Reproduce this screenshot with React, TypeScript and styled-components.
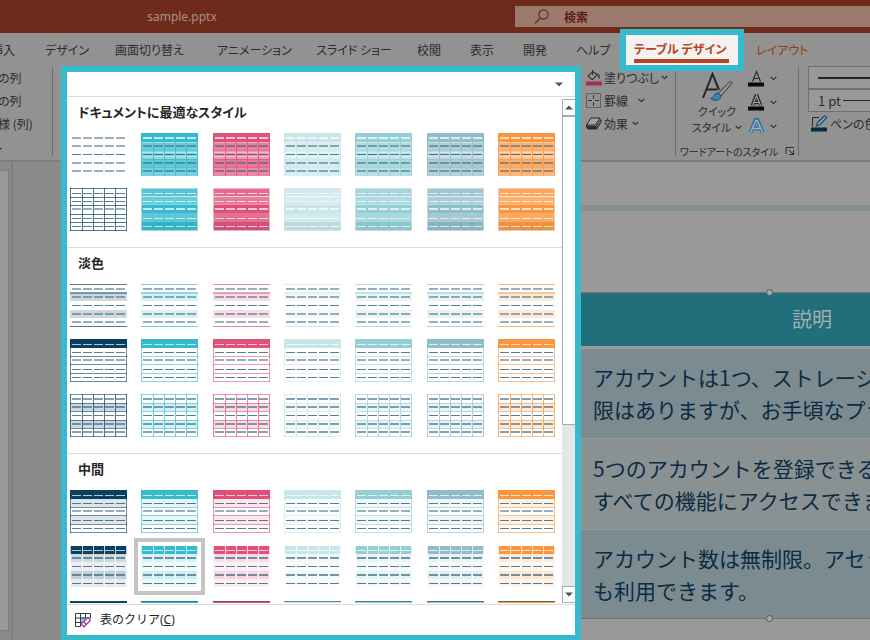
import React from 'react';
import styled, { createGlobalStyle } from 'styled-components';

const jp = '"Noto Sans CJK JP", sans-serif';
const accent = '#36bacd';

const GlobalStyle = createGlobalStyle`
  *, *::before, *::after { box-sizing: border-box; }
  body { margin: 0; background: #929292; font-family: "Noto Sans", ${jp}; }
  button, input { font: inherit; color: inherit; }
  button { border: 0; padding: 0; margin: 0; background: none; text-align: left; cursor: pointer; }
`;

const Window = styled.div`
  position: relative;
  display: flex;
  flex-direction: column;
  height: 100vh;
  overflow: hidden;
  color: #2c2c2c;
`;

/* ---------- title bar ---------- */

const TitleBar = styled.header`
  display: flex;
  align-items: center;
  flex: none;
  height: 33px;
  background: #6e2a1a;
`;

const FileName = styled.div`
  width: 364px;
  text-align: center;
  font-size: 12px;
  line-height: 20px;
  color: #ab9189;
`;

const Search = styled.label`
  display: flex;
  align-items: center;
  flex: 1;
  gap: 14px;
  height: 21px;
  margin-left: 151px;
  padding-left: 19px;
  background: #9b7a6e;
  color: #5f1f10;
`;

const SearchInput = styled.input`
  flex: 1;
  min-width: 0;
  border: 0;
  padding: 0;
  background: transparent;
  outline: 0;
  font: bold 12px/20px ${jp};
  &::placeholder { color: #5f1f10; opacity: 1; }
`;

/* ---------- tabs ---------- */

const Tabs = styled.nav`
  display: grid;
  grid-template-columns: 54px 70px 102px 99px 101px 53px 53px 53px 44px 136px 1fr;
  grid-template-rows: 33px;
  align-items: center;
  flex: none;
  height: 33px;
  margin-left: -9px;
`;

const Tab = styled.button<{ $tone?: string }>`
  font: 12px/20px ${jp};
  font-feature-settings: "palt";
  white-space: nowrap;
  color: ${p => p.$tone || '#2c2c2c'};
`;

const ActiveTab = styled(Tab)`
  position: relative;
  z-index: 3;
  width: 124px;
  height: 42px;
  margin: -4px 0 -5px;
  border: 6px solid ${accent};
  padding: 2px 9px 0 8px;
  background: #f3f2f1;
  font-weight: bold;
  color: #b7421f;
  &::after {
    content: "";
    display: block;
    height: 4px;
    background: #b7421f;
  }
`;

/* ---------- ribbon ---------- */

const Ribbon = styled.section`
  display: flex;
  flex: none;
  height: 96px;
  border-bottom: 2px solid #7c7c7c;
  font: 12px/23px ${jp};
  font-feature-settings: "palt";
  white-space: nowrap;
`;

const Group = styled.div<{ $w: number; $line?: boolean }>`
  position: relative;
  flex: none;
  width: ${p => p.$w}px;
  &::after {
    content: "";
    display: ${p => (p.$line ? 'block' : 'none')};
    position: absolute;
    top: 1px;
    bottom: 4px;
    right: 0;
    width: 1px;
    background: #6c6c6c;
  }
`;

const OptionLabels = styled(Group)`
  display: flex;
  flex-direction: column;
  align-items: flex-start;
  & > button { margin-left: -2px; }
`;

const Commands = styled(Group)`
  display: flex;
  flex-direction: column;
  align-items: flex-start;
  padding-left: 3px;
`;

const Command = styled.button<{ $gap?: number }>`
  display: flex;
  align-items: center;
  gap: 2px;
  height: 23px;
  & > svg:last-child { margin-left: ${p => p.$gap || 0}px; }
`;

const MoreOptions = styled.button`
  display: flex;
  align-items: center;
  height: 23px;
  margin-top: 4px;
  & > svg { margin-left: -3px; }
`;

const WordArt = styled(Group)`
  display: grid;
  grid-template-columns: 62px 1fr;
  grid-template-rows: 72px 1fr;
  padding-left: 4px;
`;

const QuickStyle = styled.button`
  display: flex;
  flex-direction: column;
  align-items: center;
  padding: 6px 0 0 12px;
  font-size: 11px;
  line-height: 16px;
  & > span { display: flex; align-items: center; gap: 4px; }
  & > svg { flex: none; }
`;

const LetterButtons = styled.div`
  display: flex;
  flex-direction: column;
  padding: 1px 0 0 6px;
`;

const LetterButton = styled.button`
  display: flex;
  align-items: center;
  gap: 5px;
  height: 24px;
`;

const GroupCaption = styled.div`
  grid-column: 1 / -1;
  display: flex;
  align-items: center;
  gap: 7px;
  height: 26px;
  font-size: 10px;
`;

const Pen = styled.div`
  flex: 1;
  min-width: 0;
  padding-left: 9px;
  overflow: hidden;
`;

const PenField = styled.button`
  display: flex;
  align-items: center;
  gap: 2px;
  width: 120%;
  height: 23px;
  border: 1px solid #707070;
  padding-left: 9px;
  background: #989898;
  font-size: 13px;
`;

const Stroke = styled.span<{ $h: number }>`
  flex: 1;
  height: ${p => p.$h}px;
  background: #262626;
`;

const PenColor = styled(Command)`
  padding-left: 3px;
`;

/* ---------- slide area ---------- */

const Workspace = styled.main`
  display: flex;
  flex: 1;
  min-height: 0;
  background: #8a8a8a;
`;

const Thumbnails = styled.aside`
  flex: none;
  width: 9px;
  margin: 8px 0 9px;
  border: solid #7c7c7c;
  border-width: 1px 1px 1px 0;
  background: #999999;
`;

const Splitter = styled.div`
  flex: none;
  width: 2px;
  margin: 0 48px 0 2px;
  background: #7e7e7e;
`;

const Slide = styled.section`
  flex: 1;
  min-width: 0;
  padding-top: 43px;
  background: #999999;
`;

const SlideRule = styled.div`
  height: 6px;
  margin-bottom: 81px;
  background: #849094;
`;

const TableFrame = styled.div`
  position: relative;
  width: 546px;
  margin-left: 435px;
  border: 1px solid #757575;
`;

const Plans = styled.table`
  width: 100%;
  table-layout: fixed;
  border-collapse: collapse;
  font: 21px/32px ${jp};
  color: #0a2c45;
  th, td { padding: 0 10px; text-align: left; }
  th { height: 54px; border-bottom: 3px solid #999999; background: #216f7b; font-size: 20px; font-weight: normal; text-align: center; color: #a3aeb0; }
  td { height: 91px; border-bottom: 1px solid #959b9c; background: #7b8b8f; white-space: nowrap; }
  tr:nth-child(even) td { background: #8a9192; }
  tbody tr:last-child td { height: 89px; border-bottom: 0; }
`;

const Handle = styled.span<{ $bottom?: boolean }>`
  position: absolute;
  left: 50%;
  ${p => (p.$bottom ? 'bottom' : 'top')}: -4px;
  width: 7px;
  height: 7px;
  margin-left: -3px;
  border: 1px solid #555555;
  border-radius: 50%;
  background: #aaaaaa;
`;

/* ---------- style gallery ---------- */

const Menu = styled.section`
  position: absolute;
  top: 66px;
  bottom: -1px;
  left: 61px;
  z-index: 2;
  display: flex;
  flex-direction: column;
  width: 520px;
  border: 6px solid ${accent};
  background: #ffffff;
  color: #262626;
`;

const Filter = styled.button`
  display: flex;
  align-items: center;
  justify-content: flex-end;
  flex: none;
  height: 25px;
  border-bottom: 1px solid #dcdcdc;
  padding-right: 12px;
`;

const Body = styled.div`
  display: flex;
  flex: 1;
  min-height: 0;
`;

const Sections = styled.div`
  flex: 1;
  overflow: hidden;
`;

const Section = styled.section`
  height: 206px;
  border-bottom: 1px solid #dcdcdc;
  padding: 0 7px 0 3px;
  &:first-child { height: 151px; }
  &:last-child { border: 0; }
`;

const Heading = styled.h2`
  height: 36px;
  margin: 0;
  padding: 5px 0 0 8px;
  font: bold 13px/20px ${jp};
  font-feature-settings: "palt";
`;

const Swatches = styled.div`
  display: flex;
  justify-content: space-between;
  margin-bottom: 12px;
`;

const SwatchButton = styled.button<{ $on?: boolean }>`
  width: 57px;
  height: 43px;
  outline: ${p => (p.$on ? '4px solid #c4c4c4' : '0')};
  outline-offset: 3px;
  & > svg { display: block; }
`;

const Scrollbar = styled.div`
  display: flex;
  flex-direction: column;
  flex: none;
  width: 13px;
  margin: 2px 0 1px;
  background: #e6e6e6;
`;

const ScrollArrow = styled.button`
  display: flex;
  align-items: center;
  justify-content: center;
  flex: none;
  height: 17px;
  border: 1px solid #ababab;
  border-right: 0;
  background: #ffffff;
`;

const Thumb = styled.div`
  height: 309px;
  margin-bottom: auto;
  border: 1px solid #ababab;
  border-right: 0;
  background: #ffffff;
`;

const Clear = styled.button`
  display: flex;
  align-items: center;
  flex: none;
  gap: 9px;
  height: 31px;
  border-top: 1px solid #dcdcdc;
  padding-left: 8px;
  font: 12px/20px "Noto Sans", ${jp};
`;

/* ---------- icons ---------- */

const Chevron = () => (
  <svg width="7" height="5" viewBox="0 0 7 5" fill="none" stroke="#2c2c2c" strokeWidth="1.1">
    <path d="M.7 1l2.8 2.6L6.300 1" />
  </svg>
);

const Triangle = ({ up = false, size = 8 }: { up?: boolean; size?: number }) => (
  <svg width={size} height="5" viewBox="0 0 8 5">
    <path d={up ? 'M0 4.500L4 .5l4 4z' : 'M0 .5h8l-4 4z'} fill="#555555" />
  </svg>
);

const SearchIcon = () => (
  <svg width="16" height="16" viewBox="0 0 16 16" fill="none" stroke="#6b2616" strokeWidth="1.2">
    <circle cx="9.500" cy="5.500" r="4.600" />
    <path d="M6.200 8.900L1 14.500" />
  </svg>
);

const FillIcon = () => (
  <svg width="17" height="17" viewBox="0 0 17 17" fill="none">
    <path d="M7.500 2.500L3.200 7.200l4 3.600 5-5.300zM7.500 1v5" stroke="#2c2c2c" strokeWidth="1.1" />
    <path d="M11.500 5c2.400.1 2.900 1.700 2.400 4.500" stroke="#154f74" strokeWidth="1.700" />
    <path d="M1 12.500h16v4H1z" fill="#a03257" />
  </svg>
);

const BordersIcon = () => (
  <svg width="17" height="17" viewBox="0 0 17 17" fill="none" stroke="#333333">
    <path d="M1.500 1.500h14v14h-14z" strokeDasharray="1 1" />
    <path d="M8.500 3v11M3 8.500h11" strokeDasharray="4 3" />
  </svg>
);

const EffectsIcon = () => (
  <svg width="17" height="15" viewBox="0 0 17 15" strokeLinejoin="round">
    <path d="M1.500 9l4.500-7h9l-4.500 7z" fill="#a2a2a2" stroke="#262626" />
    <path d="M1.500 9v2.500l1.500 1.500h8.500l4.500-7V3.500L11 10.500H3z" fill="#333333" stroke="#262626" />
    <path d="M11.500 11l4-6" stroke="#8c8c8c" />
  </svg>
);

const QuickIcon = () => (
  <svg width="32" height="31" viewBox="0 0 32 31" fill="none">
    <path d="M2 26L11.500 2 18 18M5.500 17.500H16" stroke="#262626" strokeWidth="2" />
    <path d="M28.500 10c1.400-1 3 .3 2 1.800L20 24l-2.800-2.700z" fill="#969696" stroke="#333333" />
    <path d="M17 21c-3 0-3.500 2-4.300 3.500-.8 1.200-2 1.500-3.200 1.500 2.500 3.500 10 3.500 10.500-2.300z" fill="#3f86ad" stroke="#164e74" />
  </svg>
);

const LetterIcon = ({ kind }: { kind: 'fill' | 'outline' | 'glow' }) => (
  <svg width="17" height="17" viewBox="0 0 17 17" fill="none">
    {kind === 'glow' ? (
      <>
        <path d="M2.500 14.500L7.500 2h2l5 12.500M4.500 10.500h8" stroke="#2b75a3" strokeWidth="4" />
        <path d="M2.500 14.500L7.800 2.500h1.400l5.300 12M4.800 10.500h7.400" stroke="#a5b3bb" strokeWidth="1.400" />
      </>
    ) : (
      <>
        {kind === 'outline' && <path d="M4.300 11.500L8 2h1l3.700 9.500M5.500 8.500h6" stroke="#2c2c2c" strokeWidth="3.400" />}
        <path d="M4.500 11.500L8.500 1.500l4 10M5.500 8.500h6" stroke={kind === 'outline' ? '#a0a0a0' : '#2c2c2c'} strokeWidth="1.200" />
        <path d="M0 12.500h16v4H0z" fill="#080808" />
      </>
    )}
  </svg>
);

const LauncherIcon = () => (
  <svg width="10" height="10" viewBox="0 0 10 10" fill="none" stroke="#2c2c2c">
    <path d="M1 8V1.500h8M4 4l4 4M8.500 4v4.500H4" />
  </svg>
);

const PenIcon = () => (
  <svg width="17" height="17" viewBox="0 0 17 17" fill="none">
    <path d="M8 2.500H1.500v9" stroke="#2c2c2c" />
    <path d="M5.500 11l1-3.500L13 1.200c1.300-.8 3 .8 2 2.200L8.800 9.800z" fill="#8ca4b0" stroke="#174f76" strokeWidth="1.300" />
    <path d="M0 12.500h16v4H0z" fill="#062c40" />
  </svg>
);

const ClearIcon = () => (
  <svg width="16" height="16" viewBox="0 0 16 16" fill="none">
    <path d="M5 5h6v6H5z" fill="#8ac3ee" />
    <path d="M.5 1.500h15V6M.5 1.500v13h5M.5 6h15M.5 10.500h6M5.500 1.500v13M10.500 1.500V6" stroke="#3b3b3b" />
    <path d="M13 5.500l2.500 2.800-6.500 6.500-3-2.800z" fill="#ffffff" stroke="#a4389c" strokeWidth="1.300" />
    <path d="M8.500 9.800l3 2.800" stroke="#a4389c" strokeWidth="1.300" />
  </svg>
);

/* ---------- table style swatches ---------- */

type Kind = 'plain' | 'grid' | 'themed' | 'shaded' | 'ruled' | 'header' | 'lattice' | 'banded' | 'tiled' | 'topline';

const ROWS = [0, 9, 17, 26, 34, 43];
const COLS = [0, 12, 23, 34, 45, 56];
const DASH_Y = [5, 13, 21, 30, 38];

const Dashes = ({ light = [], thick = [], weak = 0.46 }: { light?: number[]; thick?: number[]; weak?: number }) => (
  <>
    {DASH_Y.map((y, r) =>
      COLS.slice(0, 5).map(x => (
        <rect
          key={`${r}-${x}`}
          x={x + (x ? 1 : 2)}
          y={thick.includes(r) ? y - 1 : y}
          width="9"
          height={thick.includes(r) ? 2 : 1}
          fill={light.includes(r) ? '#ffffff' : '#1d5372'}
          opacity={light.includes(r) ? 0.7 : thick.includes(r) ? weak : 0.75}
        />
      ))
    )}
  </>
);

const Bands = ({ color, alpha }: { color: string; alpha: number[] }) => (
  <>
    {alpha.map((a, r) => (
      <rect key={r} x="0" y={ROWS[r]} width="57" height={ROWS[r + 1] - ROWS[r]} fill={color} opacity={a} />
    ))}
  </>
);

const HLines = ({ color, at, alpha = 0.6 }: { color: string; at: number[]; alpha?: number }) => (
  <>
    {at.map(y => (
      <rect key={y} x="0" y={y} width="57" height="1" fill={color} opacity={alpha} />
    ))}
  </>
);

const VLines = ({ color, at, alpha = 0.6 }: { color: string; at: number[]; alpha?: number }) => (
  <>
    {at.map(x => (
      <rect key={x} x={x} y="0" width="1" height="43" fill={color} opacity={alpha} />
    ))}
  </>
);

const Swatch = ({ kind, color }: { kind: Kind; color: string }) => {
  const allRows = [0, 9, 17, 26, 34, 42];
  const all = [0, 1, 2, 3, 4];
  return (
    <svg width="57" height="43" viewBox="0 0 57 43" shapeRendering="crispEdges">
      {kind === 'plain' && <Dashes thick={[0, 1, 3, 4]} weak={0.45} />}
      {kind === 'grid' && (
        <>
          <HLines color="#0b3f60" at={allRows} alpha={0.7} />
          <VLines color="#0b3f60" at={COLS} alpha={0.7} />
          <Dashes thick={[2]} />
        </>
      )}
      {kind === 'themed' && (
        <>
          <Bands color={color} alpha={[1, 0.72, 0.58, 0.78, 0.68]} />
          <HLines color="#ffffff" at={[9, 19, 23]} alpha={0.35} />
          <HLines color={color} at={[17, 26, 34]} alpha={0.6} />
          <VLines color={color} at={COLS} alpha={0.8} />
          <Dashes light={[0]} thick={[0, 1, 3, 4]} />
        </>
      )}
      {kind === 'shaded' && (
        <>
          <Bands color={color} alpha={[0.85, 0.75, 1, 0.82, 1]} />
          <rect x="0" y="34" width="57" height="9" fill="#1d5372" opacity=".07" />
          <HLines color="#ffffff" at={[8]} alpha={0.7} />
          <HLines color="#ffffff" at={[16, 25]} alpha={0.2} />
          <path d="M.5.5h56v42H.5z" fill="none" stroke="#dfe3e6" strokeOpacity=".7" />
          <Dashes light={all} thick={[2]} />
        </>
      )}
      {kind === 'ruled' && (
        <>
          <Bands color={color} alpha={[0, 0.2, 0, 0.2, 0]} />
          <HLines color={color} at={[0, 42]} alpha={0.7} />
          <rect x="0" y="8" width="57" height="2" fill={color} opacity=".5" />
          <Dashes thick={[0, 1, 3, 4]} />
        </>
      )}
      {(kind === 'header' || kind === 'banded') && (
        <>
          <Bands color={color} alpha={kind === 'banded' ? [1, 0.13, 0, 0.13, 0] : [1, 0, 0, 0, 0]} />
          <HLines color={color} at={[17, 25, 34, 42]} />
          <VLines color={color} at={[0, 56]} />
          <Dashes light={[0]} thick={[2]} />
        </>
      )}
      {kind === 'lattice' && (
        <>
          <Bands color={color} alpha={[0, 0.2, 0, 0.2, 0]} />
          <HLines color={color} at={allRows} />
          <VLines color={color} at={COLS} alpha={0.7} />
          <Dashes thick={[0, 1, 3, 4]} weak={0.55} />
        </>
      )}
      {kind === 'tiled' && (
        <>
          <Bands color={color} alpha={[1, 0.2, 0.08, 0.24, 0.1]} />
          <HLines color="#ffffff" at={[0, 42]} alpha={1} />
          <VLines color="#ffffff" at={COLS} alpha={0.75} />
          <Dashes light={[0]} thick={[1, 3]} weak={0.6} />
        </>
      )}
      {kind === 'topline' && (
        <>
          <rect x="0" y="1" width="57" height="2" fill={color} />
          <rect x="0" y="1" width="57" height="1" fill="#1d5372" opacity=".65" />
        </>
      )}
    </svg>
  );
};

const palette = ['#0b3f60', '#36bacd', '#e2507a', '#c8e6ea', '#93cfd5', '#8fbdc9', '#fb963f'];

const sections: { title: string; rows: Kind[] }[] = [
  { title: 'ドキュメントに最適なスタイル', rows: ['themed', 'shaded'] },
  { title: '淡色', rows: ['ruled', 'header', 'lattice'] },
  { title: '中間', rows: ['banded', 'tiled', 'topline'] },
];

const kindFor = (kind: Kind, column: number): Kind => {
  if (column > 0) return kind;
  if (kind === 'themed') return 'plain';
  if (kind === 'shaded') return 'grid';
  return kind;
};

const StyleMenu = () => (
  <Menu>
    <Filter aria-label="フィルター">
      <Triangle />
    </Filter>
    <Body>
      <Sections>
        {sections.map(s => (
          <Section key={s.title}>
            <Heading>{s.title}</Heading>
            {s.rows.map(kind => (
              <Swatches key={kind}>
                {palette.map((color, i) => (
                  <SwatchButton key={color} $on={kind === 'tiled' && i === 1} aria-label={`${s.title} ${i + 1}`}>
                    <Swatch kind={kindFor(kind, i)} color={color} />
                  </SwatchButton>
                ))}
              </Swatches>
            ))}
          </Section>
        ))}
      </Sections>
      <Scrollbar>
        <ScrollArrow aria-label="上へ"><Triangle up /></ScrollArrow>
        <Thumb />
        <ScrollArrow aria-label="下へ"><Triangle /></ScrollArrow>
      </Scrollbar>
    </Body>
    <Clear>
      <ClearIcon />
      <span>表のクリア(<u>C</u>)</span>
    </Clear>
  </Menu>
);

const tabs = ['挿入', 'デザイン', '画面切り替え', 'アニメーション', 'スライド ショー', '校閲', '表示', '開発', 'ヘルプ'];

const plans = [
  ['アカウントは1つ、ストレージ', '限はありますが、お手頃なプラ'],
  ['5つのアカウントを登録できる', 'すべての機能にアクセスできま'],
  ['アカウント数は無制限。アセッ', 'も利用できます。'],
];

export default function App() {
  return (
    <Window>
      <GlobalStyle />
      <TitleBar>
        <FileName>sample.pptx</FileName>
        <Search>
          <SearchIcon />
          <SearchInput placeholder="検索" aria-label="検索" />
        </Search>
      </TitleBar>
      <Tabs>
        {tabs.map(t => <Tab key={t}>{t}</Tab>)}
        <ActiveTab>テーブル デザイン</ActiveTab>
        <Tab $tone="#933a22">レイアウト</Tab>
      </Tabs>
      <Ribbon>
        <OptionLabels $w={53} $line>
          <Command>の列</Command>
          <Command>の列</Command>
          <Command>様 (列)</Command>
          <MoreOptions aria-label="その他"><Chevron /></MoreOptions>
        </OptionLabels>
        <Group $w={529} />
        <Commands $w={94} $line>
          <Command><FillIcon />塗りつぶし<Chevron /></Command>
          <Command $gap={8}><BordersIcon />罫線<Chevron /></Command>
          <Command $gap={2}><EffectsIcon />効果<Chevron /></Command>
        </Commands>
        <WordArt $w={123} $line>
          <QuickStyle>
            <QuickIcon />
            クイック
            <span>スタイル<Chevron /></span>
          </QuickStyle>
          <LetterButtons>
            <LetterButton aria-label="文字の塗りつぶし"><LetterIcon kind="fill" /><Chevron /></LetterButton>
            <LetterButton aria-label="文字の輪郭"><LetterIcon kind="outline" /><Chevron /></LetterButton>
            <LetterButton aria-label="文字の効果"><LetterIcon kind="glow" /><Chevron /></LetterButton>
          </LetterButtons>
          <GroupCaption>ワードアートのスタイル<LauncherIcon /></GroupCaption>
        </WordArt>
        <Pen>
          <PenField aria-label="ペンのスタイル"><Stroke $h={2} /></PenField>
          <PenField>1 pt<Stroke $h={1} /></PenField>
          <PenColor><PenIcon />ペンの色</PenColor>
        </Pen>
      </Ribbon>
      <Workspace>
        <Thumbnails />
        <Splitter />
        <Slide>
          <SlideRule />
          <TableFrame>
            <Plans>
              <colgroup>
                <col width="86" />
                <col />
              </colgroup>
              <thead>
                <tr><th /><th>説明</th></tr>
              </thead>
              <tbody>
                {plans.map(([a, b]) => (
                  <tr key={a}><td /><td>{a}<br />{b}</td></tr>
                ))}
              </tbody>
            </Plans>
            <Handle />
            <Handle $bottom />
          </TableFrame>
        </Slide>
      </Workspace>
      <StyleMenu />
    </Window>
  );
}
